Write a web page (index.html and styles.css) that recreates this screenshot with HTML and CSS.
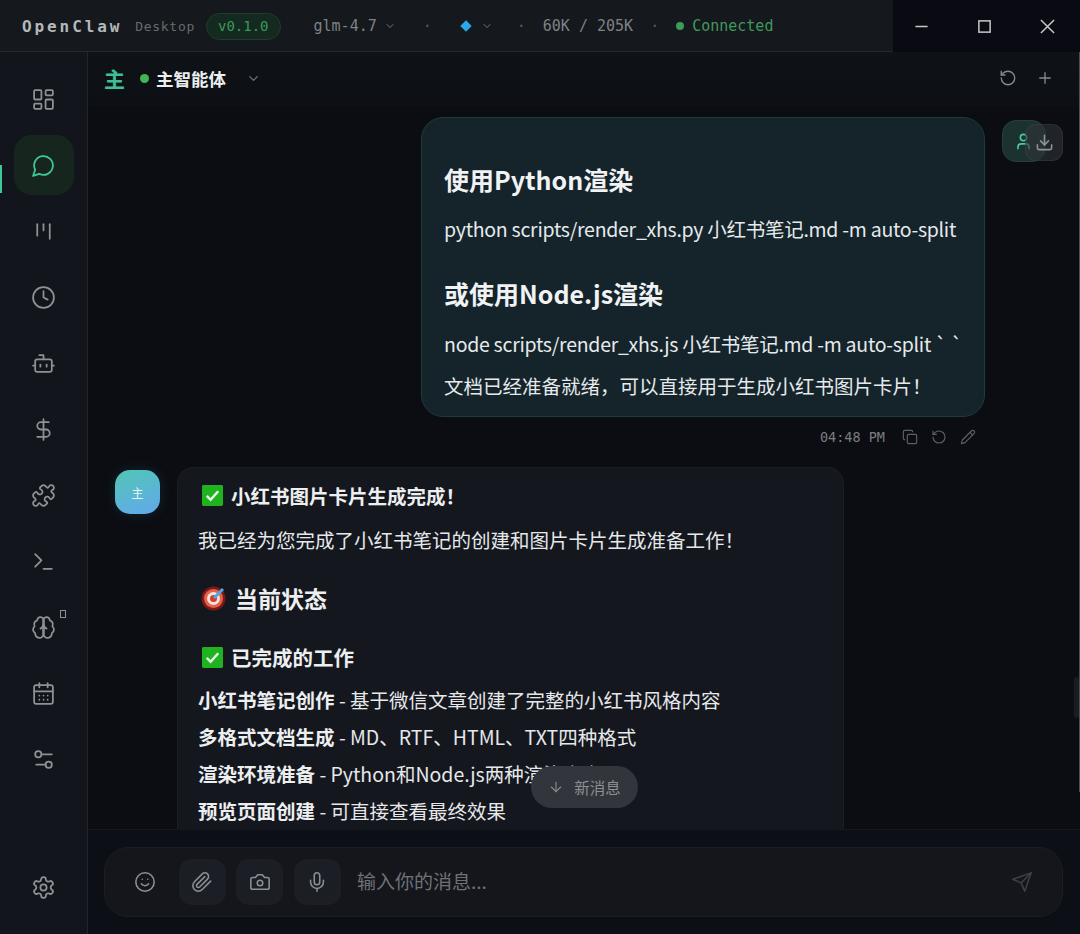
FILE: index.html
```html
<!DOCTYPE html>
<html lang="zh-CN">
<head>
    <meta charset="UTF-8">
    <meta name="viewport" content="width=device-width, initial-scale=1.0">
    <title>OpenClaw Desktop</title>
    <link rel="stylesheet" href="styles.css">
</head>
<body>
<div class="app">
    <header class="titlebar">
        <div class="title-left">
            <span class="brand">OpenClaw</span>
            <span class="brand-sub">Desktop</span>
            <span class="version">v0.1.0</span>
            <span class="model">glm-4.7</span>
            <svg class="icon chev-sm" viewBox="0 0 24 24"><path d="m6 9 6 6 6-6"/></svg>
            <span class="sep sep-a">·</span>
            <span class="diamond"></span>
            <svg class="icon chev-sm chev-b" viewBox="0 0 24 24"><path d="m6 9 6 6 6-6"/></svg>
            <span class="sep sep-b">·</span>
            <span class="tokens">60K / 205K</span>
            <span class="sep sep-c">·</span>
            <span class="status-dot"></span>
            <span class="status">Connected</span>
        </div>
        <div class="window-controls">
            <svg class="win-icon" viewBox="0 0 16 16"><path d="M1.5 8h13"/></svg>
            <svg class="win-icon" viewBox="0 0 16 16"><rect x="2" y="2" width="12" height="12"/></svg>
            <svg class="win-icon" viewBox="0 0 16 16"><path d="M1 1l14 14M15 1 1 15"/></svg>
        </div>
    </header>

    <div class="body">
        <nav class="sidebar">
            <div class="nav-list">
                <a class="nav-item"><svg class="icon" viewBox="0 0 24 24"><rect width="7" height="9" x="3" y="3" rx="1"/><rect width="7" height="5" x="14" y="3" rx="1"/><rect width="7" height="9" x="14" y="12" rx="1"/><rect width="7" height="5" x="3" y="16" rx="1"/></svg></a>
                <a class="nav-item active"><svg class="icon" viewBox="0 0 24 24"><path d="M7.9 20A9 9 0 1 0 4 16.1L2 22Z"/></svg></a>
                <a class="nav-item"><svg class="icon" viewBox="0 0 24 24"><path d="M6 5v11"/><path d="M12 5v6"/><path d="M18 5v14"/></svg></a>
                <a class="nav-item"><svg class="icon" viewBox="0 0 24 24"><circle cx="12" cy="12" r="10"/><polyline points="12 6 12 12 16 14"/></svg></a>
                <a class="nav-item"><svg class="icon" viewBox="0 0 24 24"><path d="M12 8V4H8"/><rect width="16" height="12" x="4" y="8" rx="2"/><path d="M2 14h2"/><path d="M20 14h2"/><path d="M15 13v2"/><path d="M9 13v2"/></svg></a>
                <a class="nav-item"><svg class="icon" viewBox="0 0 24 24"><line x1="12" x2="12" y1="2" y2="22"/><path d="M17 5H9.5a3.5 3.5 0 0 0 0 7h5a3.5 3.5 0 0 1 0 7H6"/></svg></a>
                <a class="nav-item"><svg class="icon" viewBox="0 0 24 24"><path d="M19.439 7.85c-.049.322.059.648.289.878l1.568 1.568c.47.47.706 1.087.706 1.704s-.235 1.233-.706 1.704l-1.611 1.611a.98.98 0 0 1-.837.276c-.47-.07-.802-.48-.968-.925a2.501 2.501 0 1 0-3.214 3.214c.446.166.855.497.925.968a.979.979 0 0 1-.276.837l-1.61 1.61a2.404 2.404 0 0 1-1.705.707 2.402 2.402 0 0 1-1.704-.706l-1.568-1.568a1.026 1.026 0 0 0-.877-.29c-.493.074-.84.504-1.02.968a2.5 2.5 0 1 1-3.237-3.237c.464-.18.894-.527.967-1.02a1.026 1.026 0 0 0-.289-.877l-1.568-1.568A2.402 2.402 0 0 1 1.998 12c0-.617.236-1.234.706-1.704L4.23 8.77c.24-.24.581-.353.917-.303.515.077.877.528 1.073 1.01a2.5 2.5 0 1 0 3.259-3.259c-.482-.196-.933-.558-1.01-1.073-.05-.336.062-.676.303-.917l1.525-1.525A2.402 2.402 0 0 1 12 1.998c.617 0 1.234.236 1.704.706l1.568 1.568c.23.23.556.338.877.29.493-.074.84-.504 1.02-.968a2.5 2.5 0 1 1 3.237 3.237c-.464.18-.894.527-.967 1.02Z"/></svg></a>
                <a class="nav-item"><svg class="icon" viewBox="0 0 24 24"><polyline points="4 17 10 11 4 5"/><line x1="12" x2="20" y1="19" y2="19"/></svg></a>
                <a class="nav-item"><svg class="icon" viewBox="0 0 24 24"><path d="M12 5a3 3 0 1 0-5.997.125 4 4 0 0 0-2.526 5.77 4 4 0 0 0 .556 6.588A4 4 0 1 0 12 18Z"/><path d="M12 5a3 3 0 1 1 5.997.125 4 4 0 0 1 2.526 5.77 4 4 0 0 1-.556 6.588A4 4 0 1 1 12 18Z"/><path d="M15 13a4.5 4.5 0 0 1-3-4 4.5 4.5 0 0 1-3 4"/><path d="M12 5v13"/></svg><span class="nav-badge"></span></a>
                <a class="nav-item"><svg class="icon" viewBox="0 0 24 24"><path d="M8 2v4"/><path d="M16 2v4"/><rect width="18" height="18" x="3" y="4" rx="2"/><path d="M3 10h18"/><path d="M8 14h.01"/><path d="M12 14h.01"/><path d="M16 14h.01"/><path d="M8 18h.01"/><path d="M12 18h.01"/><path d="M16 18h.01"/></svg></a>
                <a class="nav-item"><svg class="icon" viewBox="0 0 24 24"><path d="M20 7h-9"/><path d="M14 17H5"/><circle cx="17" cy="17" r="3"/><circle cx="7" cy="7" r="3"/></svg></a>
            </div>
            <a class="nav-item settings"><svg class="icon" viewBox="0 0 24 24"><path d="M12.22 2h-.44a2 2 0 0 0-2 2v.18a2 2 0 0 1-1 1.73l-.43.25a2 2 0 0 1-2 0l-.15-.08a2 2 0 0 0-2.73.73l-.22.38a2 2 0 0 0 .73 2.73l.15.1a2 2 0 0 1 1 1.72v.51a2 2 0 0 1-1 1.74l-.15.09a2 2 0 0 0-.73 2.73l.22.38a2 2 0 0 0 2.73.73l.15-.08a2 2 0 0 1 2 0l.43.25a2 2 0 0 1 1 1.73V20a2 2 0 0 0 2 2h.44a2 2 0 0 0 2-2v-.18a2 2 0 0 1 1-1.73l.43-.25a2 2 0 0 1 2 0l.15.08a2 2 0 0 0 2.73-.73l.22-.39a2 2 0 0 0-.73-2.73l-.15-.08a2 2 0 0 1-1-1.74v-.5a2 2 0 0 1 1-1.74l.15-.09a2 2 0 0 0 .73-2.73l-.22-.38a2 2 0 0 0-2.73-.73l-.15.08a2 2 0 0 1-2 0l-.43-.25a2 2 0 0 1-1-1.73V4a2 2 0 0 0-2-2z"/><circle cx="12" cy="12" r="3"/></svg></a>
        </nav>

        <main class="main">
            <div class="chat-header">
                <span class="agent-mark">主</span>
                <span class="agent-dot"></span>
                <span class="agent-name">主智能体</span>
                <svg class="icon agent-chev" viewBox="0 0 24 24"><path d="m6 9 6 6 6-6"/></svg>
                <div class="header-actions">
                    <svg class="icon" viewBox="0 0 24 24"><path d="M3 12a9 9 0 1 0 9-9 9.75 9.75 0 0 0-6.74 2.74L3 8"/><path d="M3 3v5h5"/></svg>
                    <svg class="icon" viewBox="0 0 24 24"><path d="M5 12h14"/><path d="M12 5v14"/></svg>
                </div>
            </div>

            <div class="messages">
                <div class="msg-user">
                    <div class="msg-col">
                        <div class="bubble-user">
                            <h3>使用Python渲染</h3>
                            <p class="code-line">python scripts/render_xhs.py 小红书笔记.md -m auto-split</p>
                            <h3>或使用Node.js渲染</h3>
                            <p class="code-line">node scripts/render_xhs.js 小红书笔记.md -m auto-split ` `</p>
                            <p>文档已经准备就绪，可以直接用于生成小红书图片卡片！</p>
                        </div>
                        <div class="msg-meta">
                            <span class="msg-time">04:48 PM</span>
                            <svg class="icon" viewBox="0 0 24 24"><rect width="14" height="14" x="8" y="8" rx="2"/><path d="M4 16c-1.1 0-2-.9-2-2V4c0-1.1.9-2 2-2h10c1.1 0 2 .9 2 2"/></svg>
                            <svg class="icon" viewBox="0 0 24 24"><path d="M3 12a9 9 0 1 0 9-9 9.75 9.75 0 0 0-6.74 2.74L3 8"/><path d="M3 3v5h5"/></svg>
                            <svg class="icon" viewBox="0 0 24 24"><path d="M17 3a2.85 2.83 0 1 1 4 4L7.5 20.5 2 22l1.5-5.5Z"/><path d="m15 5 4 4"/></svg>
                        </div>
                    </div>
                    <div class="avatar-user">
                        <svg class="icon" viewBox="0 0 24 24"><path d="M19 21v-2a4 4 0 0 0-4-4H9a4 4 0 0 0-4 4v2"/><circle cx="12" cy="7" r="4"/></svg>
                        <div class="download-btn">
                            <svg class="icon" viewBox="0 0 24 24"><path d="M21 15v4a2 2 0 0 1-2 2H5a2 2 0 0 1-2-2v-4"/><polyline points="7 10 12 15 17 10"/><line x1="12" x2="12" y1="15" y2="3"/></svg>
                        </div>
                    </div>
                </div>

                <div class="msg-bot">
                    <div class="avatar-bot">主</div>
                    <div class="bubble-bot">
                        <h4><svg class="emoji" viewBox="0 0 22 22"><rect width="22" height="22" rx="1.5" fill="#1fb31f"/><path d="M5 11.5l4 4 8-9" fill="none" stroke="#e8f8e8" stroke-width="2.6"/></svg>小红书图片卡片生成完成！</h4>
                        <p>我已经为您完成了小红书笔记的创建和图片卡片生成准备工作！</p>
                        <h3><svg class="emoji emoji-lg" viewBox="0 0 26 26"><circle cx="12.5" cy="13.5" r="12" fill="#7a1a14"/><circle cx="12.5" cy="13.5" r="9.5" fill="#e8604c"/><circle cx="12.5" cy="13.5" r="6.5" fill="#f0e4dc"/><circle cx="12.5" cy="13.5" r="3.5" fill="#d8392c"/><path d="M13 13 22 4" stroke="#4aa8e8" stroke-width="3"/></svg>当前状态</h3>
                        <h4 class="section"><svg class="emoji" viewBox="0 0 22 22"><rect width="22" height="22" rx="1.5" fill="#1fb31f"/><path d="M5 11.5l4 4 8-9" fill="none" stroke="#e8f8e8" stroke-width="2.6"/></svg>已完成的工作</h4>
                        <ul class="done-list">
                            <li><strong>小红书笔记创作</strong> - 基于微信文章创建了完整的小红书风格内容</li>
                            <li><strong>多格式文档生成</strong> - MD、RTF、HTML、TXT四种格式</li>
                            <li><strong>渲染环境准备</strong> - Python和Node.js两种渲染方案</li>
                            <li><strong>预览页面创建</strong> - 可直接查看最终效果</li>
                        </ul>
                    </div>
                </div>

                <div class="new-msg">
                    <svg class="icon" viewBox="0 0 24 24"><path d="M12 5v14"/><path d="m19 12-7 7-7-7"/></svg>
                    <span>新消息</span>
                </div>
                <div class="scroll-thumb"></div>
            </div>

            <div class="composer-wrap">
                <div class="composer">
                    <span class="tool plain"><svg class="icon" viewBox="0 0 24 24"><circle cx="12" cy="12" r="10"/><path d="M8 14s1.5 2 4 2 4-2 4-2"/><line x1="9" x2="9.01" y1="9" y2="9"/><line x1="15" x2="15.01" y1="9" y2="9"/></svg></span>
                    <span class="tool"><svg class="icon" viewBox="0 0 24 24"><path d="m21.44 11.05-9.19 9.19a6 6 0 0 1-8.49-8.49l8.57-8.57A4 4 0 1 1 18 8.84l-8.59 8.57a2 2 0 0 1-2.83-2.83l8.49-8.48"/></svg></span>
                    <span class="tool"><svg class="icon" viewBox="0 0 24 24"><path d="M14.5 4h-5L7 7H4a2 2 0 0 0-2 2v9a2 2 0 0 0 2 2h16a2 2 0 0 0 2-2V9a2 2 0 0 0-2-2h-3l-2.5-3z"/><circle cx="12" cy="13" r="3"/></svg></span>
                    <span class="tool"><svg class="icon" viewBox="0 0 24 24"><path d="M12 2a3 3 0 0 0-3 3v7a3 3 0 0 0 6 0V5a3 3 0 0 0-3-3Z"/><path d="M19 10v2a7 7 0 0 1-14 0v-2"/><line x1="12" x2="12" y1="19" y2="22"/></svg></span>
                    <span class="placeholder">输入你的消息...</span>
                    <span class="send"><svg class="icon" viewBox="0 0 24 24"><path d="m22 2-7 20-4-9-9-4Z"/><path d="M22 2 11 13"/></svg></span>
                </div>
            </div>
            <div class="edge-line"></div>
        </main>
    </div>
</div>
</body>
</html>
```

FILE: styles.css
```css
* {
    box-sizing: border-box;
}

html, body {
    margin: 0;
    height: 100%;
}

body {
    font-family: "Noto Sans CJK SC", "Noto Sans", sans-serif;
    background: #0b0d12;
    color: #e6e8ea;
    overflow: hidden;
}

.icon {
    fill: none;
    stroke: currentColor;
    stroke-width: 2;
    stroke-linecap: round;
    stroke-linejoin: round;
    flex: none;
}

.app {
    display: flex;
    flex-direction: column;
    height: 934px;
}

/* Title bar */
.titlebar {
    display: flex;
    height: 52px;
    flex: none;
    background: #15181c;
    border-bottom: 1px solid #26292d;
}

.title-left {
    flex: 1;
    display: flex;
    align-items: center;
    padding: 1px 0 0 22px;
    font-family: "DejaVu Sans Mono", "Noto Sans CJK SC", monospace;
    font-size: 15px;
    color: #7d8286;
}

.brand {
    font-weight: 700;
    font-size: 16px;
    letter-spacing: 2.9px;
    color: #b4b8bb;
}

.brand-sub {
    margin-left: 13px;
    font-size: 13px;
    letter-spacing: 0.7px;
    color: #676c70;
}

.version {
    margin-left: 11px;
    height: 27px;
    padding: 0 11px;
    display: flex;
    align-items: center;
    border-radius: 14px;
    background: #14291f;
    border: 1px solid #1f3d2c;
    color: #3a9a5c;
    font-size: 14px;
}

.model {
    margin-left: 33px;
}

.chev-sm {
    width: 12px;
    height: 12px;
    margin-left: 7px;
    color: #6f7478;
}

.sep {
    color: #55595d;
}

.sep-a {
    margin-left: 27px;
}

.diamond {
    width: 8px;
    height: 8px;
    margin-left: 30px;
    background: #2aa8e8;
    transform: rotate(45deg);
}

.chev-b {
    margin-left: 11px;
}

.sep-b {
    margin-left: 24px;
}

.tokens {
    margin-left: 17px;
}

.sep-c {
    margin-left: 17px;
}

.status-dot {
    width: 8px;
    height: 8px;
    margin-left: 17px;
    border-radius: 50%;
    background: #3d9a58;
}

.status {
    margin-left: 8px;
    color: #3f9a5c;
}

.window-controls {
    width: 187px;
    flex: none;
    display: flex;
    align-items: center;
    gap: 48px;
    padding-left: 21px;
    margin-bottom: -1px;
    background: #0a0b12;
}

.win-icon {
    width: 15px;
    height: 15px;
    flex: none;
    fill: none;
    stroke: #c6c8cc;
    stroke-width: 1.6;
}

/* Body */
.body {
    flex: 1;
    display: flex;
    min-height: 0;
}

.sidebar {
    width: 88px;
    flex: none;
    display: flex;
    flex-direction: column;
    justify-content: space-between;
    background: #12151b;
    border-right: 1px solid #22252b;
    padding: 17px 0 17px;
}

.nav-list {
    display: flex;
    flex-direction: column;
    gap: 6px;
}

.nav-item {
    position: relative;
    width: 60px;
    height: 60px;
    margin-left: 14px;
    padding-right: 2px;
    display: flex;
    align-items: center;
    justify-content: center;
    color: #8e9296;
    border-radius: 18px;
}

.nav-item .icon {
    width: 25px;
    height: 25px;
    stroke-width: 1.7;
}

.nav-item.active {
    background: #16261f;
    color: #3fc79a;
}

.nav-item.active::before {
    content: "";
    position: absolute;
    left: -14px;
    top: 30px;
    width: 2px;
    height: 28px;
    background: #3fc79a;
}

.nav-badge {
    position: absolute;
    left: 46px;
    top: 13px;
    width: 6px;
    height: 8px;
    border: 1px solid #8e9296;
}

/* Main */
.main {
    position: relative;
    flex: 1;
    min-width: 0;
    display: flex;
    flex-direction: column;
}

.edge-line {
    position: absolute;
    right: 0;
    top: 0;
    width: 1px;
    height: 740px;
    background: #4c5056;
}

.chat-header {
    height: 54px;
    flex: none;
    display: flex;
    align-items: center;
    padding: 0 26px 2px 16px;
    background: linear-gradient(#0f1318, #0c0f14);
}

.agent-mark {
    font-size: 21px;
    font-weight: 700;
    color: #3fbf98;
}

.agent-dot {
    width: 9px;
    height: 9px;
    margin-left: 15px;
    border-radius: 50%;
    background: #43b554;
}

.agent-name {
    margin-left: 7px;
    font-size: 17.5px;
    font-weight: 700;
    color: #eceef0;
}

.agent-chev {
    width: 15px;
    height: 15px;
    margin-left: 20px;
    color: #70757a;
}

.header-actions {
    margin-left: auto;
    display: flex;
    gap: 19px;
    color: #85898d;
}

.header-actions .icon {
    width: 18px;
    height: 18px;
    stroke-width: 1.8;
}

.messages {
    position: relative;
    flex: 1;
    min-height: 0;
    overflow: hidden;
    padding: 11px 0 0 27px;
    background: #0b0d12;
}

.msg-user {
    display: flex;
    justify-content: flex-end;
    align-items: flex-start;
    gap: 17px;
    padding-right: 34px;
}

.msg-col {
    width: 564px;
}

.bubble-user {
    height: 300px;
    padding: 44px 22px 0;
    border-radius: 22px;
    background: #14242a;
    border: 1px solid #1e3a3a;
    color: #e6eaec;
}

h3, h4, p, ul {
    margin: 0;
    padding: 0;
}

.bubble-user h3 {
    font-size: 25px;
    line-height: 34px;
    font-weight: 700;
    color: #f0f2f3;
    margin-bottom: 18px;
}

.bubble-user p {
    font-size: 19.5px;
    line-height: 29px;
    margin-bottom: 13px;
    white-space: nowrap;
}

.bubble-user .code-line {
    letter-spacing: -0.27px;
}

.bubble-user p + h3 {
    margin-top: 33px;
    margin-bottom: 19px;
}

.msg-meta {
    display: flex;
    align-items: center;
    justify-content: flex-end;
    gap: 13px;
    margin-top: 12px;
    padding-right: 9px;
    height: 16px;
    color: #5c6064;
}

.msg-meta .icon {
    width: 16px;
    height: 16px;
    stroke-width: 1.7;
}

.msg-time {
    font-family: "DejaVu Sans Mono", monospace;
    font-size: 13.5px;
    color: #797d81;
    margin-right: 4px;
}

.avatar-user {
    position: relative;
    width: 44px;
    height: 42px;
    margin-top: 3px;
    display: flex;
    align-items: center;
    justify-content: flex-end;
    padding-right: 12px;
    border-radius: 14px;
    background: #1c3230;
    border: 1px solid #25403c;
    color: #4fc79f;
}

.avatar-user .icon {
    width: 19px;
    height: 19px;
}

.download-btn {
    position: absolute;
    left: 22px;
    top: 3px;
    width: 38px;
    height: 37px;
    display: flex;
    align-items: center;
    justify-content: center;
    border-radius: 11px;
    background: rgba(46, 50, 56, 0.6);
    border: 1px solid rgba(80, 86, 90, 0.25);
    color: #8e9296;
}

.msg-bot {
    display: flex;
    gap: 17px;
    margin-top: 22px;
}

.avatar-bot {
    width: 45px;
    height: 44px;
    margin-top: 3px;
    flex: none;
    display: flex;
    align-items: center;
    justify-content: center;
    border-radius: 15px;
    background: linear-gradient(160deg, #52c6b4, #62a8ec);
    color: #eaf6f6;
    font-size: 12px;
    box-shadow: 0 0 14px rgba(80, 170, 210, 0.15);
}

.bubble-bot {
    width: 667px;
    padding: 13px 20px 0;
    border-radius: 16px 16px 0 0;
    background: #14171e;
    border: 1px solid #1b1e25;
    color: #e6e8ea;
}

.bubble-bot p {
    font-size: 19.5px;
    line-height: 29px;
    margin: 15px 0 27px;
}

.bubble-bot h3 {
    display: flex;
    align-items: center;
    font-size: 23px;
    line-height: 34px;
    font-weight: 700;
    color: #eceef0;
}

.bubble-bot h4 {
    display: flex;
    align-items: center;
    font-size: 19.5px;
    line-height: 29px;
    font-weight: 700;
    color: #eceef0;
}

.bubble-bot h4.section {
    font-size: 20.5px;
    line-height: 30px;
    margin: 27px 0 13px;
}

.emoji {
    width: 21px;
    height: 21px;
    margin: 0 8px 0 4px;
    flex: none;
}

.emoji-lg {
    width: 26px;
    height: 26px;
    margin: 0 8px 0 3px;
}

.done-list {
    list-style: none;
}

.done-list li {
    font-size: 19.5px;
    line-height: 29px;
    margin-bottom: 8px;
    white-space: nowrap;
}

.done-list strong {
    color: #eceef0;
}

/* Floating over the thread */
.new-msg {
    position: absolute;
    left: 443px;
    top: 660px;
    width: 107px;
    height: 42px;
    display: flex;
    align-items: center;
    justify-content: center;
    gap: 10px;
    padding-bottom: 1px;
    border-radius: 21px;
    background: #32353c;
    color: #8c9094;
    font-size: 15.5px;
}

.new-msg .icon {
    width: 16px;
    height: 16px;
    stroke-width: 1.6;
}

.scroll-thumb {
    position: absolute;
    right: 1px;
    top: 571px;
    width: 5px;
    height: 41px;
    border-radius: 3px;
    background: #1a1c20;
}

/* Composer */
.composer-wrap {
    height: 105px;
    flex: none;
    padding: 17px 17px 17px 16px;
    background: #0c0f15;
    border-top: 1px solid #15181e;
}

.composer {
    height: 70px;
    display: flex;
    align-items: center;
    padding: 0 29px 0 16px;
    gap: 10.5px;
    border-radius: 24px;
    background: #14161c;
    border: 1px solid #1a1d23;
}

.tool {
    width: 47px;
    height: 46px;
    flex: none;
    display: flex;
    align-items: center;
    justify-content: center;
    border-radius: 13px;
    background: #1b1e24;
    color: #8c9094;
}

.tool.plain {
    background: none;
}

.tool .icon {
    width: 22px;
    height: 22px;
    stroke-width: 1.7;
}

.placeholder {
    margin-left: 6px;
    padding-bottom: 3px;
    flex: 1;
    font-size: 19px;
    color: #6e7276;
}

.send {
    display: flex;
    color: #3e4247;
}

.send .icon {
    width: 22px;
    height: 22px;
    stroke-width: 1.6;
}
```
